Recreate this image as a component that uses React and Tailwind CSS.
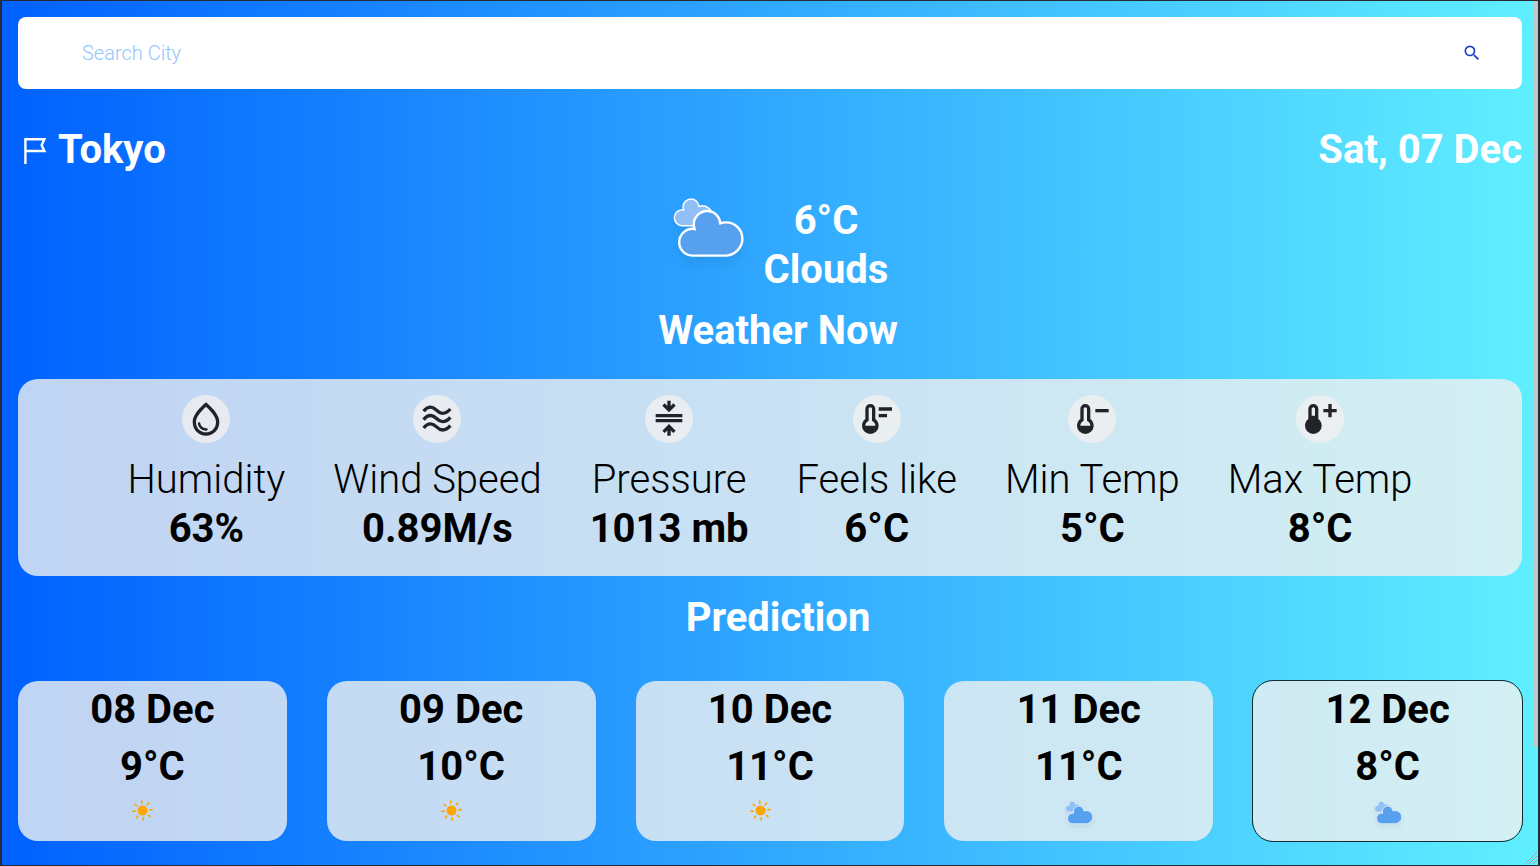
import React from "react";
import { MdSearch, MdOutlineWaterDrop } from "react-icons/md";

const CLOUD =
  "M47.7,35.4c0-4.6-3.7-8.2-8.2-8.2c-1,0-1.9,0.2-2.8,0.5c-0.3-3.4-3.1-6.2-6.6-6.2c-3.7,0-6.7,3-6.7,6.7c0,0.8,0.2,1.6,0.4,2.3c-0.3-0.1-0.7-0.1-1-0.1c-3.7,0-6.7,3-6.7,6.7c0,3.6,2.9,6.6,6.5,6.7l17.2,0C44.2,43.3,47.7,39.8,47.7,35.4z";

const THERMOMETER =
  "M8 21q-2.075 0-3.538-1.463T3 16q0-1.2.525-2.238T5 12V6q0-1.25.875-2.125T8 3t2.125.875T11 6v6q.95.725 1.475 1.763T13 16q0 2.075-1.463 3.538T8 21Z";

function CloudIcon({ className, stroke = "white" }) {
  return (
    <svg viewBox="10.5 14 40 40" className={className} aria-hidden="true">
      <path d={CLOUD} fill="#91C0F8" stroke={stroke} strokeWidth="1.2" transform="translate(4,2.6) scale(0.6)" />
      <path d={CLOUD} fill="#57A0EE" stroke={stroke} strokeWidth="1.2" />
    </svg>
  );
}

function SunIcon() {
  return (
    <svg viewBox="0 0 44 32" className="h-8 w-11" aria-hidden="true">
      <g transform="translate(12.5,13.5) rotate(-5)">
        <circle r="5" fill="orange" />
        {[0, 45, 90, 135, 180, 225, 270, 315].map((angle) => (
          <line key={angle} y1="-7.4" y2="-9.6" stroke="orange" strokeWidth="1.6" strokeLinecap="round" transform={`rotate(${angle})`} />
        ))}
      </g>
    </svg>
  );
}

function WavesIcon() {
  return (
    <svg viewBox="0 0 24 24" className="size-10" fill="none" stroke="currentColor" strokeWidth="2" aria-hidden="true">
      {[0, 5, 10].map((y) => (
        <path key={y} transform={`translate(0,${y})`} d="M4 7.4C5 6 6.5 4.9 8.3 4.9C11.5 4.9 12 8.6 15.3 8.6C17.2 8.6 18.8 7.4 20 6" />
      ))}
    </svg>
  );
}

function PressureIcon() {
  return (
    <svg viewBox="0 0 24 24" className="size-10" fill="currentColor" aria-hidden="true">
      <path d="M12 8L8 4l1.4-1.4L11 4.15V1h2v3.15l1.6-1.55L16 4z" />
      <path d="M4 9h16v2H4zM4 12h16v2H4z" />
      <path d="M11 22v-3.15l-1.6 1.55L8 19l4-4 4 4-1.4 1.4L13 18.85V22z" />
    </svg>
  );
}

function ThermometerIcon({ mark, full }) {
  const hole = full
    ? "M7 10h2V6q0-.425-.288-.713T8 5t-.713.288T7 6Z"
    : "M5 16h6q0-.725-.313-1.35T9.8 13.6L9 13V6q0-.425-.288-.713T8 5t-.713.288T7 6v7l-.8.6q-.575.425-.888 1.05T5 16Z";
  return (
    <svg viewBox="0 0 24 24" className="size-10" fill="currentColor" aria-hidden="true">
      <path fillRule="evenodd" d={THERMOMETER + hole} />
      <path d={mark} />
    </svg>
  );
}

const stats = [
  { label: "Humidity", value: "63%", icon: <MdOutlineWaterDrop className="size-10" /> },
  { label: "Wind Speed", value: "0.89M/s", icon: <WavesIcon /> },
  { label: "Pressure", value: "1013 mb", icon: <PressureIcon /> },
  { label: "Feels like", value: "6°C", icon: <ThermometerIcon mark="M13 5h8v2h-8zM13 9h5v2h-5z" /> },
  { label: "Min Temp", value: "5°C", icon: <ThermometerIcon mark="M14 6h8v2h-8z" /> },
  { label: "Max Temp", value: "8°C", icon: <ThermometerIcon full mark="M17 11V8h-3V6h3V3h2v3h3v2h-3v3z" /> },
];

const days = [
  { date: "08 Dec", temp: "9°C", sky: "sun" },
  { date: "09 Dec", temp: "10°C", sky: "sun" },
  { date: "10 Dec", temp: "11°C", sky: "sun" },
  { date: "11 Dec", temp: "11°C", sky: "cloud" },
  { date: "12 Dec", temp: "8°C", sky: "cloud", active: true },
];

export default function App() {
  return (
    <div className="relative min-h-screen border-x-2 border-y border-[#262a33] bg-[linear-gradient(90deg,#0061ff,#60efff)] px-4 pt-4 pb-6 font-['Roboto',sans-serif] text-[40px] leading-[49px] font-bold">
      <form className="flex h-18 items-center rounded-lg bg-white pr-10 pl-16" onSubmit={(e) => e.preventDefault()}>
        <input
          type="text"
          aria-label="Search City"
          placeholder="Search City"
          className="min-w-0 flex-1 text-xl font-light text-blue-800 outline-none placeholder:text-[#93c5fd]"
        />
        <button type="submit" aria-label="Search" className="text-[#1e40c4]">
          <MdSearch className="size-5" />
        </button>
      </form>

      <header className="mt-9 flex items-center justify-between text-white">
        <h1 className="flex items-center">
          <svg viewBox="0 0 40 40" className="size-10" fill="none" stroke="currentColor" strokeWidth="2.4" aria-hidden="true">
            <path d="M7.4 34V9.3H26.4L23.6 15.3L26.4 21H7.4" />
          </svg>
          Tokyo
        </h1>
        <p>Sat, 07 Dec</p>
      </header>

      <section className="mt-[22px] flex items-start justify-center gap-4 pl-4 text-center text-white">
        <CloudIcon className="size-20 drop-shadow-[0_8px_5px_rgba(0,0,0,0.06)]" />
        <div>
          <p>6°C</p>
          <p>Clouds</p>
        </div>
      </section>

      <h2 className="mt-3 pl-4 text-center text-white">Weather Now</h2>
      <section className="mt-6 flex flex-wrap justify-center gap-12 rounded-[20px] bg-[#f0f0f0]/80 pt-4 pb-[23px] text-center text-black">
        {stats.map((s) => (
          <div key={s.label} className="flex flex-col items-center">
            <div className="mb-3 flex size-12 items-center justify-center rounded-full bg-[#f0f0f0]/80 text-[#212329]">{s.icon}</div>
            <p className="font-light">{s.label}</p>
            <p>{s.value}</p>
          </div>
        ))}
      </section>

      <h2 className="mt-[17px] pl-4 text-center text-white">Prediction</h2>
      <section className="mt-[39px] grid grid-cols-5 gap-10 text-center text-black">
        {days.map((d) => (
          <article
            key={d.date}
            className={
              "flex h-40 flex-col items-center rounded-[20px] bg-[#f0f0f0]/80 pt-1" +
              (d.active ? " outline outline-[#102a30]" : "")
            }
          >
            <p>{d.date}</p>
            <p className="mt-2 mb-1.5">{d.temp}</p>
            {d.sky === "sun" ? (
              <SunIcon />
            ) : (
              <CloudIcon stroke="#e3eefb" className="mt-[3px] size-8 drop-shadow-[0_2px_2px_rgba(0,0,0,0.08)]" />
            )}
          </article>
        ))}
      </section>

      <div className="absolute top-0 right-px h-[746px] w-[3px] rounded-b-sm bg-[#c1c8ca]" />
      <svg viewBox="0 0 14 14" className="absolute right-0 bottom-0 size-3.5" stroke="#a8a0a0" aria-hidden="true">
        <path d="M1 13L13 1M5 13L13 5M9 13L13 9" />
      </svg>
    </div>
  );
}
